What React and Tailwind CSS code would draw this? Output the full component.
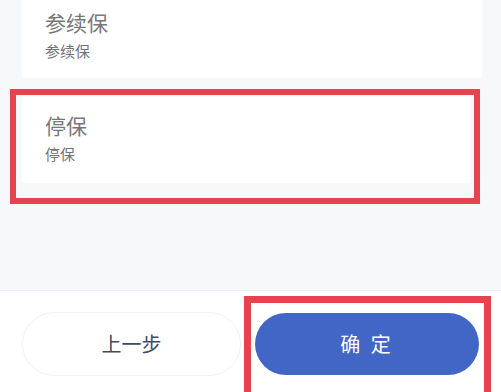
import React from 'react';

const font = { fontFamily: '"Noto Sans CJK SC", "Noto Sans", sans-serif' };

const Option = ({ title, desc, className = '' }) => (
  <div className={`bg-white rounded-[3px] pl-[23px] ${className}`}>
    <p className="text-[21px] leading-[26px] text-[#777777]">{title}</p>
    <p className="mt-[6px] text-[15px] leading-[20px] text-[#737373]">{desc}</p>
  </div>
);

export default function App() {
  return (
    <div className="w-[501px] h-[392px] flex flex-col overflow-hidden bg-white" style={font}>
      <div className="h-[290px] bg-[#f7f8fa] flex flex-col">
        <Option title="参续保" desc="参续保" className="ml-[22px] w-[460px] h-[78px] pt-[9px] rounded-t-none" />

        <div className="mt-[11px] ml-[10px] w-[470px] h-[115px] border-[6px] border-[#e5434e] pl-[6px] pr-[4px] pt-[1px]">
          <Option title="停保" desc="停保" className="h-[87px] pt-[16px]" />
        </div>
      </div>

      <div className="flex-1 flex items-start gap-[14px] px-[22px] pt-[21px] border-t border-[#eef0f3]">
        <button className="w-[223px] h-[64px] rounded-full bg-white border border-[#f1f2f4] text-[20px] text-[#3f4b68]">
          上一步
        </button>
        <div className="relative mt-[1px]">
          <div className="absolute left-[-11px] right-[-12px] top-[-17px] bottom-[-30px] border-[7px] border-[#e5434e]" />
          <button className="relative w-[224px] h-[62px] rounded-full bg-[#4166c5] text-white text-[20px] tracking-[3px]">
            确 定
          </button>
        </div>
      </div>
    </div>
  );
}
